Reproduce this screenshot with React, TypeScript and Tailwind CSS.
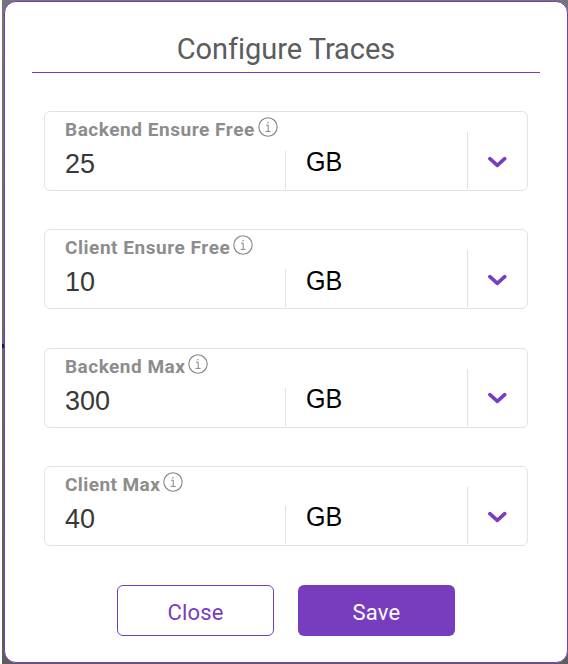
type Field = { label: string; value: string; tracking: string; shift: string; unitPad: string; arrowPad: string };

const fields: Field[] = [
  { label: "Backend Ensure Free", value: "25", tracking: "tracking-[0.54px]", shift: "mt-0", unitPad: "pt-[35px]", arrowPad: "pt-[44px]" },
  { label: "Client Ensure Free", value: "10", tracking: "tracking-[0.54px]", shift: "mt-[38px]", unitPad: "pt-[36px]", arrowPad: "pt-[44px]" },
  { label: "Backend Max", value: "300", tracking: "tracking-[0.49px]", shift: "mt-[39px]", unitPad: "pt-[35px]", arrowPad: "pt-[43px]" },
  { label: "Client Max", value: "40", tracking: "tracking-[0.42px]", shift: "mt-[38px]", unitPad: "pt-[35px]", arrowPad: "pt-[44px]" },
];

function InfoIcon() {
  return (
    <svg className="ml-[3px] h-5 w-5 shrink-0" viewBox="0 0 20 20" fill="none" stroke="#858585">
      <circle cx="10" cy="10" r="9.2" strokeWidth="1.1" />
      <path d="M8 8.2h2.2v6M7.6 14.4h5" strokeWidth="1" />
      <circle cx="9.9" cy="5.7" r="0.8" fill="#858585" stroke="none" />
    </svg>
  );
}

function FieldRow({ label, value, tracking, shift, unitPad, arrowPad }: Field) {
  return (
    <div className={`flex h-20 w-[484px] shrink-0 rounded-md border border-[#e2e2e2] ${shift}`}>
      <div className="flex w-60 flex-col pl-5">
        <div className="mt-[5px] flex h-5 items-start">
          <span className={`mt-[2px] whitespace-nowrap font-['Roboto',sans-serif] text-[19px] leading-[22px] font-bold text-[#8d8d8d] ${tracking}`}>
            {label}
          </span>
          <InfoIcon />
        </div>
        <span className="mt-[12px] text-[27px] leading-[30px] text-[#393939]">{value}</span>
      </div>
      <div className="mt-[39px] flex h-[38px] w-px bg-[#e0e0e0]" />
      <div className={`w-[181px] pl-5 text-[27px] leading-[30px] text-black ${unitPad}`}>
        <span className="inline-block origin-left scale-x-[0.93]">GB</span>
      </div>
      <div className="mt-5 h-[57px] w-px bg-[#e0e0e0]" />
      <div className={`flex-1 pl-5 ${arrowPad}`}>
        <svg className="h-3 w-[19px]" viewBox="0 0 19 12" fill="none" stroke="#783dbe" strokeWidth="3.6" strokeLinecap="round" strokeLinejoin="round">
          <path d="M1.9 2.7 9.3 9.3l7.4-6.6" />
        </svg>
      </div>
    </div>
  );
}

export default function App() {
  return (
    <div className="h-[664px] w-[568px] overflow-hidden bg-white pl-[2px] font-['Liberation_Sans',sans-serif]">
      <div className="relative h-full bg-gradient-to-b from-[#757575] to-[#5d5d5d] pl-[2px] pt-px">
        <div className="absolute left-0 top-[344px] h-1 w-[2px] bg-[#211238]" />
        <div className="flex h-[662px] w-[564px] flex-col rounded-[12px] border border-[#783dbe] bg-white px-[27px]">
          <h1 className="flex h-[71px] shrink-0 justify-center border-b border-[#783dbe] pt-[29px] font-['Roboto',sans-serif] text-[29px] leading-[36px] font-normal text-[#5c5c5c]">
            <span className="whitespace-nowrap tracking-[-0.05px]">Configure Traces</span>
          </h1>
          <div className="mt-[38px] flex flex-col items-start pl-3">
            {fields.map((field) => (
              <FieldRow key={field.label} {...field} />
            ))}
          </div>
          <div className="mt-[39px] flex gap-6 pl-[85px] font-['Roboto',sans-serif] text-[22px] tracking-[0.2px]">
            <button className="h-[51px] w-[157px] rounded-md border border-[#783dbe] pt-[3px] text-[#783dbe]">Close</button>
            <button className="h-[51px] w-[157px] rounded-md bg-[#783dbe] pt-[3px] text-white">Save</button>
          </div>
        </div>
      </div>
    </div>
  );
}
